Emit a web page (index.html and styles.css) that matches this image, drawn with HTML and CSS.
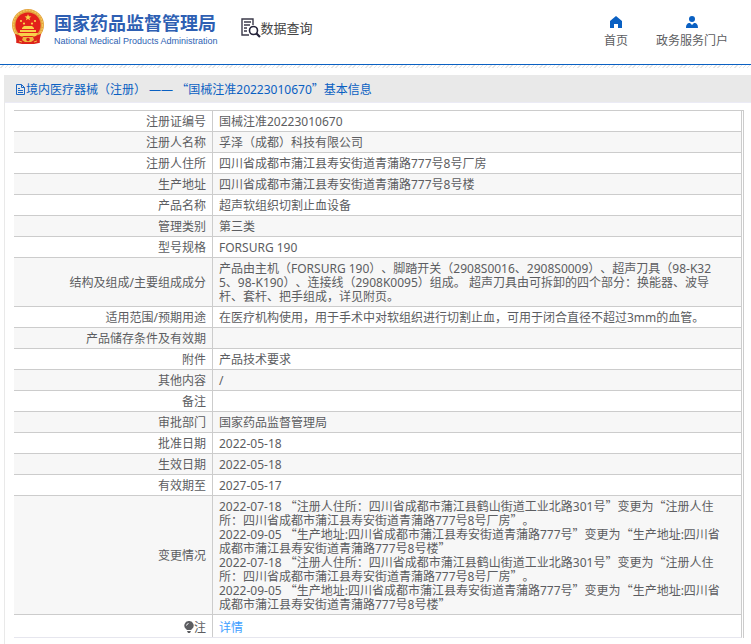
FILE: index.html
```html
<!DOCTYPE html>
<html lang="zh-CN">
  <head>
    <meta charset="UTF-8" />
    <meta name="viewport" content="width=device-width, initial-scale=1.0" />
    <title>国家药品监督管理局 - 数据查询</title>
    <link rel="stylesheet" href="styles.css">
  </head>
  <body>
    <header>
      <a href="#" class="logo">
        <svg class="emblem" viewBox="0 0 32 36" aria-hidden="true">
          <path d="M6 25L4 34l5-2 3 2h8l3-2 5 2-2-9z" fill="#d8231c" />
          <circle cx="16" cy="16" r="16" fill="#e3a23c" />
          <circle cx="16" cy="16" r="14.6" fill="none" stroke="#f3c65c" stroke-width="1.4" stroke-dasharray="2 1" />
          <circle cx="16" cy="16" r="12.6" fill="#e3211b" />
          <path d="M16 5l.9 2.3 2.5.1-2 1.5.7 2.4-2.1-1.4-2.1 1.4.7-2.4-2-1.5 2.5-.1z" fill="#f8d24a" />
          <g fill="#f8d24a">
            <circle cx="9" cy="12" r="1.1" />
            <circle cx="12" cy="14.6" r="1.1" />
            <circle cx="20" cy="14.6" r="1.1" />
            <circle cx="23" cy="12" r="1.1" />
            <path d="M10 19l2-2h8l2 2v1H10zM8 21h16v2H8zM6 24h20l-2 3H8z" />
          </g>
          <path d="M3 25c5 1 7 4 13 4s8-3 13-4l-2 9-5 1H10l-5-1z" fill="#dd221b" />
          <path d="M11 28h10l1 3-3 2h-6l-3-2z" fill="#eeb63e" />
          <circle cx="16" cy="30.5" r="1.8" fill="#d8231c" />
          <path d="M7 32l3 1M22 33l3-1" stroke="#eeb63e" stroke-width="1" />
        </svg>
        <span class="logo-text">
          <strong>国家药品监督管理局</strong>
          <span class="logo-en">National Medical Products Administration</span>
        </span>
      </a>
      <a href="#" class="query">
        <svg viewBox="0 0 20 20" aria-hidden="true">
          <path d="M8 17H1V1h11v6" fill="none" stroke="#3b3a4a" stroke-width="1.4" />
          <path d="M3 4h7M3 7h6M3 10h3M3 13h3" stroke="#3b3a4a" stroke-width="1.3" />
          <circle cx="12.5" cy="12.5" r="4" fill="none" stroke="#24233a" stroke-width="1.6" />
          <path d="M15.5 15.5l3.5 3.5" stroke="#24233a" stroke-width="2.2" />
        </svg>
        <span>数据查询</span>
      </a>
      <nav>
        <a href="#">
          <svg viewBox="0 0 12 12" aria-hidden="true">
            <path d="M6 0l6 5v7H8V8H4v4H0V5z" fill="#0a60c2" />
          </svg>
          首页
        </a>
        <a href="#">
          <svg viewBox="0 0 12 12" aria-hidden="true">
            <circle cx="6" cy="3" r="3" fill="#0a60c2" />
            <path d="M0 12c0-3 1-5 4-5l2 2 2-2c3 0 4 2 4 5z" fill="#0a60c2" />
          </svg>
          政务服务门户
        </a>
      </nav>
    </header>
    <div class="stripe"></div>

    <main class="panel">
      <h1>
        <svg viewBox="0 0 11 13" aria-hidden="true">
          <path d="M1.5 1.5h5l3 3v7h-8zM6.5 1.5v3h3M3 5.5h2M3 7.5h5M3 9.5h5" fill="none" stroke="#1b66c4" />
        </svg>
        <span>境内医疗器械（注册） —— <span class="q">“</span>国械注准20223010670<span class="q">”</span>基本信息</span>
      </h1>

      <div class="table-wrap">
        <table>
          <tr><th scope="row">注册证编号</th><td>国械注准20223010670</td></tr>
          <tr><th scope="row">注册人名称</th><td>孚泽（成都）科技有限公司</td></tr>
          <tr><th scope="row">注册人住所</th><td>四川省成都市蒲江县寿安街道青蒲路777号8号厂房</td></tr>
          <tr><th scope="row">生产地址</th><td>四川省成都市蒲江县寿安街道青蒲路777号8号楼</td></tr>
          <tr><th scope="row">产品名称</th><td>超声软组织切割止血设备</td></tr>
          <tr><th scope="row">管理类别</th><td>第三类</td></tr>
          <tr><th scope="row">型号规格</th><td>FORSURG 190</td></tr>
          <tr><th scope="row">结构及组成/主要组成成分</th><td>产品由主机（FORSURG 190）、脚踏开关（2908S0016、2908S0009）、超声刀具（98-K325、98-K190）、连接线（2908K0095）组成。 超声刀具由可拆卸的四个部分：换能器、波导杆、套杆、把手组成，详见附页。</td></tr>
          <tr><th scope="row">适用范围/预期用途</th><td>在医疗机构使用，用于手术中对软组织进行切割止血，可用于闭合直径不超过3mm的血管。</td></tr>
          <tr><th scope="row">产品储存条件及有效期</th><td></td></tr>
          <tr><th scope="row">附件</th><td>产品技术要求</td></tr>
          <tr><th scope="row">其他内容</th><td>/</td></tr>
          <tr><th scope="row">备注</th><td></td></tr>
          <tr><th scope="row">审批部门</th><td>国家药品监督管理局</td></tr>
          <tr><th scope="row">批准日期</th><td>2022-05-18</td></tr>
          <tr><th scope="row">生效日期</th><td>2022-05-18</td></tr>
          <tr><th scope="row">有效期至</th><td>2027-05-17</td></tr>
          <tr>
            <th scope="row">变更情况</th>
            <td>
              2022-07-18 <span class="q">“</span>注册人住所：四川省成都市蒲江县鹤山街道工业北路301号<span class="q">”</span>变更为<span class="q">“</span>注册人住所：四川省成都市蒲江县寿安街道青蒲路777号8号厂房<span class="q">”</span>。<br>
              2022-09-05 <span class="q">“</span>生产地址:四川省成都市蒲江县寿安街道青蒲路777号<span class="q">”</span>变更为<span class="q">“</span>生产地址:四川省成都市蒲江县寿安街道青蒲路777号8号楼<span class="q">”</span><br>
              2022-07-18 <span class="q">“</span>注册人住所：四川省成都市蒲江县鹤山街道工业北路301号<span class="q">”</span>变更为<span class="q">“</span>注册人住所：四川省成都市蒲江县寿安街道青蒲路777号8号厂房<span class="q">”</span>。<br>
              2022-09-05 <span class="q">“</span>生产地址:四川省成都市蒲江县寿安街道青蒲路777号<span class="q">”</span>变更为<span class="q">“</span>生产地址:四川省成都市蒲江县寿安街道青蒲路777号8号楼<span class="q">”</span>
            </td>
          </tr>
          <tr class="note">
            <th scope="row">
              <svg viewBox="0 0 10 12" aria-hidden="true">
                <path d="M5 0a4.5 4.5 0 0 0-3 8l1 1h4l1-1a4.5 4.5 0 0 0-3-8zM3 10h4l-1 2H4z" fill="#5c5d61" />
                <path d="M2.5 4.5a2.5 2.5 0 0 1 2-2" fill="none" stroke="#fff" />
              </svg>注
            </th>
            <td><a href="#">详情</a></td>
          </tr>
        </table>
      </div>
    </main>
  </body>
</html>
```
FILE: styles.css
```css
body {
  margin: 0;
  background: #fff;
  color: #5c5d61;
  font-family: "Noto Sans", "Noto Sans CJK SC", sans-serif;
  font-size: 12px;
  line-height: 14px;
  text-spacing-trim: space-all;
}

a {
  color: inherit;
  text-decoration: none;
}

svg {
  flex-shrink: 0;
}

/* full-width quotes */
.q {
  font-family: "Noto Sans CJK SC", sans-serif;
  line-height: 1;
}

/* Header */
header {
  display: flex;
  align-items: flex-start;
  height: 64px;
  padding: 0 23px 0 12px;
  border-bottom: 1px solid #0a60c2;
}

.logo {
  display: flex;
  gap: 10px;
  margin-top: 9px;
  color: #2e5fb3;
}

.emblem {
  width: 32px;
  height: 36px;
}

.logo-text {
  display: flex;
  flex-direction: column;
  padding-top: 4px;
  white-space: nowrap;
}

.logo strong {
  font-size: 18px;
  line-height: 20px;
}

.logo-en {
  font-family: "Liberation Sans", Arial, sans-serif;
  font-size: 9px;
  line-height: 16px;
}

.query {
  display: flex;
  align-items: center;
  margin: 18px 0 0 23px;
  color: #444;
  font-size: 13px;
  line-height: 20px;
}

.query svg {
  width: 20px;
  height: 20px;
}

nav {
  display: flex;
  gap: 28px;
  margin: 16px 0 0 auto;
}

nav a {
  display: flex;
  flex-direction: column;
  align-items: center;
  gap: 6px;
}

nav svg {
  width: 12px;
  height: 12px;
}

.stripe {
  height: 3px;
  background: repeating-linear-gradient(135deg, #fff 0, #fff 2px, #e6e6e6 2px, #e6e6e6 3px);
}

/* Detail panel */
.panel {
  margin: 7px 0 0 4px;
  padding-bottom: 6px;
  border-left: 1px solid #e9e9e9;
}

h1 {
  display: flex;
  align-items: center;
  height: 25px;
  margin: 0;
  padding: 2px 10px 0;
  background: #e9e9e9;
  border-bottom: 1px solid #ebebf5;
  color: #0a60c2;
  font-size: 12px;
  font-weight: normal;
}

h1 svg {
  width: 11px;
  height: 13px;
}

.table-wrap {
  margin: 7px 7px 0 9px;
  padding-right: 1px;
  border-top: 1px solid #ccc;
  border-right: 1px solid #ccc;
}

table {
  width: 100%;
  border-spacing: 0;
  border-right: 1px solid #ccc;
  border-bottom: 1px solid #e6e6ee;
}

th,
td {
  height: 14px;
  padding: 4px 6px 2px;
  border-bottom: 1px solid #ccc;
  vertical-align: middle;
  word-break: break-all;
}

th {
  width: 186px;
  border-right: 1px solid #ccc;
  font-weight: normal;
  text-align: right;
}

td {
  padding-right: 12px;
  text-align: left;
}

tr:nth-child(even) {
  background: #f7f7f7;
}

.note th,
.note td {
  padding-top: 6px;
  border-bottom: none;
}

.note svg {
  width: 10px;
  height: 12px;
  vertical-align: -1px;
}

.note a {
  color: #409eff;
}
```
